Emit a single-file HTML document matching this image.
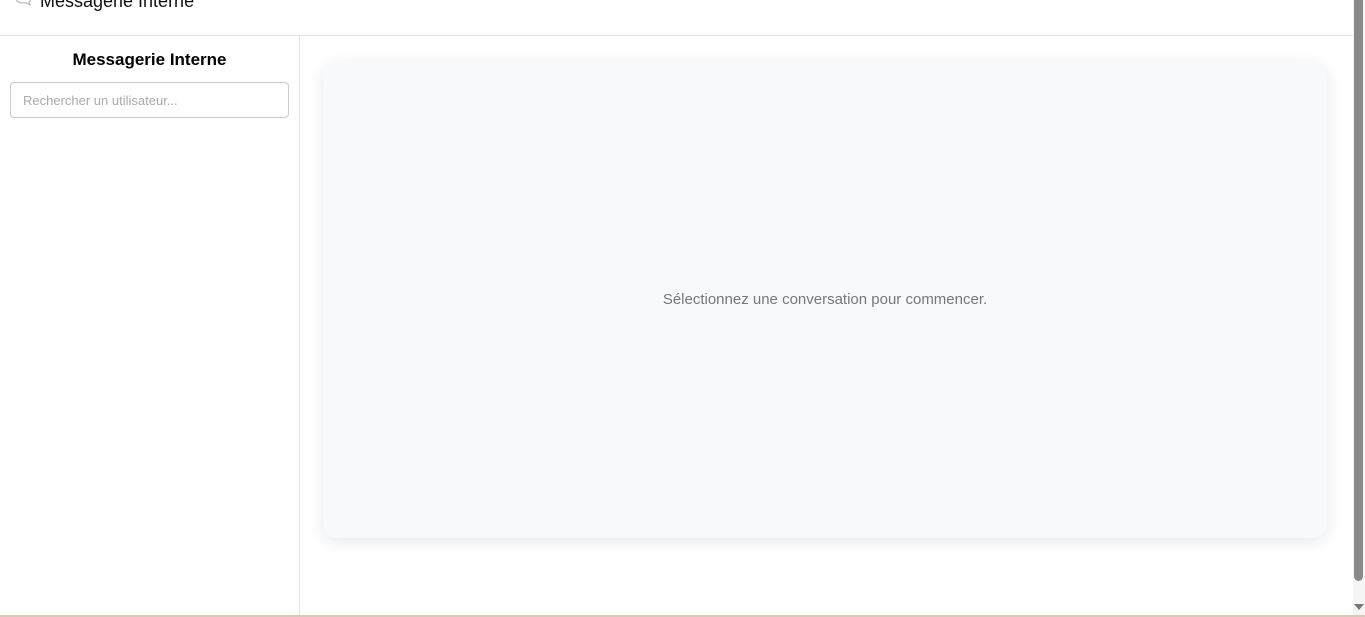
<!DOCTYPE html>
<html><head><meta charset="utf-8"><style>
body{margin:0;width:1365px;height:617px;overflow:hidden;background:#fff;font-family:"Liberation Sans",Arial,sans-serif;position:relative}
.hdr{position:absolute;left:0;top:0;width:1353px;height:35px;border-bottom:1px solid #e5e5e5}
.hdr span{position:absolute;left:40px;top:-9px;font-size:18px;color:#111}
.side{position:absolute;left:0;top:36px;width:299px;height:579px;border-right:1px solid #e5e5e5}
.side h2{margin:0;position:absolute;top:14px;width:299px;text-align:center;font-size:17px;font-weight:bold}
.inp{position:absolute;left:10px;top:46px;width:279px;height:36px;border:1px solid #ccc;border-radius:4px;box-sizing:border-box;padding-left:12px;line-height:36px;font-size:13px;color:#aaa}
.card{position:absolute;left:323px;top:61px;width:1004px;height:477px;background:#f8f9fa;border-radius:14px;box-shadow:0 4px 16px rgba(0,0,0,.09)}
.card p{margin:0;position:absolute;top:230px;width:100%;text-align:center;font-size:15px;color:#777}
.sb{position:absolute;left:1353px;top:0;width:12px;height:615px;background:#f5f5f5}
.th{position:absolute;left:1354px;top:0;width:9px;height:581px;background:#8a8a8a;border-radius:0 0 5px 5px}
.ar{position:absolute;left:1354px;top:604px;width:0;height:0;border-left:5px solid transparent;border-right:5px solid transparent;border-top:6px solid #777}
.bl{position:absolute;left:0;top:615px;width:1365px;height:2px;background:#d8c8bc}
</style></head><body>
<div class="hdr"><svg style="position:absolute;left:13px;top:-6px" width="20" height="14" viewBox="0 0 20 14"><path d="M2 2c0 4 3 7 8 7 1 0 2 0 3-.3L17 11l-1-3c1.5-1 2-2.5 2-4" fill="none" stroke="#bbb" stroke-width="1.2"/></svg><span>Messagerie Interne</span></div>
<div class="side"><h2>Messagerie Interne</h2><div class="inp">Rechercher un utilisateur...</div></div>
<div class="card"><p>Sélectionnez une conversation pour commencer.</p></div>
<div class="sb"></div><div class="th"></div><div class="ar"></div>
<div class="bl"></div>
</body></html>
